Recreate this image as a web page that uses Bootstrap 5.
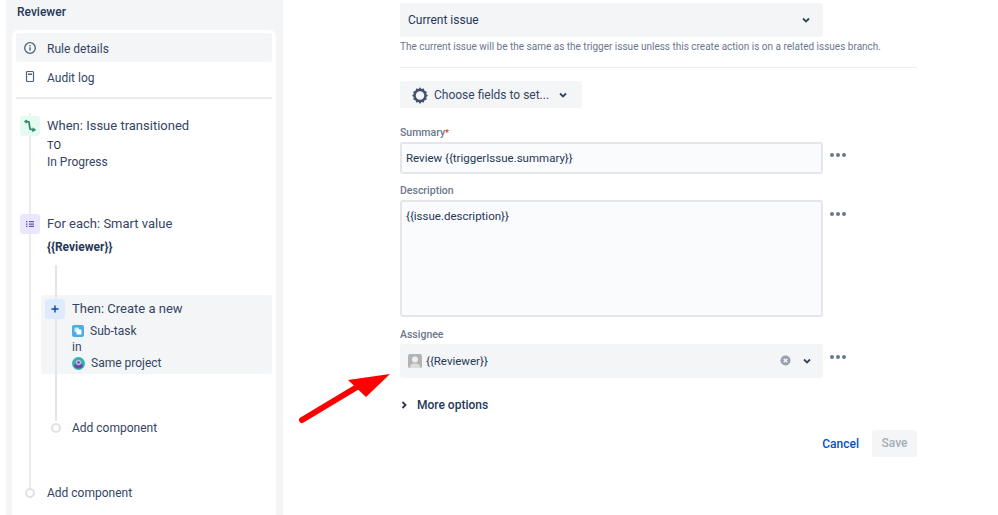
<!DOCTYPE html>
<html lang="en">
<head>
<meta charset="utf-8">
<title>Reviewer rule</title>
<link href="https://cdn.jsdelivr.net/npm/bootstrap@5.3.0/dist/css/bootstrap.min.css" rel="stylesheet">
<style>
html,body{height:515px;overflow:hidden}
body{font-family:Roboto,"Noto Sans",sans-serif;font-size:12px;color:#344563;background:#fff}
.page-wrap{height:515px;position:relative}
.side-col{width:277px;margin-left:6px;background:#f4f5f7;height:515px;flex:none;padding:0 7px 0 6px}
.side-title{height:30px;padding:4px 0 0 5px;font-size:12px;font-weight:500;line-height:16px;color:#253858}
.side-panel{background:#fff;border-radius:6px 6px 0 0;height:485px;padding:3px 4px 0;position:relative}
.nav-row{height:29px;display:flex;align-items:center;padding-left:7px;gap:10px;border-radius:3px}
.nav-row span{padding-top:2px}
.nav-row.on{background:#f4f5f7}
.nav-ic{width:14px;height:14px;flex:none;display:block}
.side-rule{height:2px;background:#ebecf0;margin:6px 0 0}
.step-a{position:relative;display:flex;gap:7px;padding-left:4px}
.step-a.s1{margin-top:17px;height:98px}
.step-a.s2{height:81px}
.ic-box{width:20px;height:20px;border-radius:3px;flex:none;display:flex;align-items:center;justify-content:center;position:relative;z-index:1}
.ic-green{background:#e3fcef}
.ic-purple{background:#eae6ff}
.ic-blue{background:#deebff}
.step-ttl{font-size:13px;line-height:18px;margin-bottom:3px}
.then-box .step-ttl{margin-bottom:5px}
.step-txt{padding-top:1px}
.step-l{line-height:16px;color:#344563}
.to-lbl{font-size:11px;color:#172b4d}
.bold-l{font-weight:700;color:#253858;margin-top:6px;line-height:16px}
.rail-out{position:absolute;left:17px;top:83px;width:2px;height:377px;background:#ebecf0}
.rail-in{position:absolute;left:43px;top:235px;width:2px;height:156px;background:#e4e6eb;z-index:1}
.then-box{margin-left:25px;height:79px;background:#f4f5f7;border-radius:3px;padding:4px;display:flex;gap:7px;position:relative}
.then-row{display:flex;align-items:center;gap:6px;line-height:16px}
.add-row{display:flex;align-items:center;gap:12px;position:relative;z-index:1}
.add-dot{width:10px;height:10px;border-radius:50%;border:2px solid #dfe1e6;background:#fff;flex:none}
.add-in{margin:45px 0 0 35px;gap:11px}
.add-out{margin:47px 0 0 9px}
.main-col{width:517px;margin-left:117px;flex:none;padding-top:3px}
.sel-box{width:423px;height:34px;background:#f4f5f7;border-radius:3px;display:flex;align-items:center;padding:0 8px;color:#253858;font-size:12px}
.help-txt{font-size:10px;line-height:14px;color:#6b778c;margin-top:3px}
.form-rule{height:1px;background:#ebecf0;margin:13px 0}
.set-btn{display:inline-flex;align-items:center;width:182px;height:27px;background:#f4f5f7;border-radius:3px;padding:0 0 0 11px;gap:5px;color:#344563;font-size:12px;font-weight:400}
.f-lbl{font-size:10.5px;line-height:14px;color:#6b778c;font-weight:500}
.req-mark{color:#de350b;font-size:9px}
.f-row{display:flex;gap:4px;margin-top:2px}
.f-in{width:423px;border:2px solid #e4e6eb;background:#fafbfc;border-radius:3px;padding:0 4px;color:#253858;display:flex;align-items:center;font-size:11.5px}
.h-one{height:32px;padding-top:2px}
.h-multi{height:117px;align-items:flex-start;padding-top:6px}
.dots{display:flex;gap:2px;padding:0 0 0 3px;height:3px;margin-top:11px}
.dots.low{margin-top:12px}
.dots i{display:block;width:4px;height:4px;border-radius:50%;background:#6b778c}
.lbl-sum{margin-top:17px}
.lbl-gap{margin-top:10px}
.lbl-gap2{margin-top:11px}
.ctl-ic{gap:11px;padding-right:3px}
.rev-txt{font-size:11.5px;padding-top:2px}
.more-row{display:flex;align-items:center;gap:9px;font-weight:500;color:#253858;margin-top:18px;line-height:18px;font-size:12px}
.act-row{display:flex;justify-content:flex-end;align-items:center;gap:13px;margin-top:16px}
.cancel-lnk{color:#0052cc;text-decoration:none;font-weight:500;padding-top:1px}
.save-btn{width:45px;height:27px;background:#f4f5f7;color:#a5adba;border:0;border-radius:3px;padding:0;font-size:12px;font-weight:500}
.arrow-svg{position:absolute;left:295px;top:368px}
</style>
</head>
<body>
<div class="page-wrap d-flex">
  <aside class="side-col">
    <div class="side-title">Reviewer</div>
    <div class="side-panel">
      <div class="rail-out"></div>
      <div class="rail-in"></div>
      <div class="nav-row on">
        <svg class="nav-ic" viewBox="0 0 14 14"><circle cx="7" cy="7" r="5.300" fill="none" stroke="#505f79" stroke-width="1.300"/><rect x="6.300" y="6.200" width="1.400" height="3.400" fill="#505f79"/><rect x="6.300" y="4.100" width="1.400" height="1.300" fill="#505f79"/></svg>
        <span>Rule details</span>
      </div>
      <div class="nav-row">
        <svg class="nav-ic" viewBox="0 0 14 14"><rect x="3.500" y="1.500" width="7" height="10" rx="1" fill="none" stroke="#505f79" stroke-width="1.200"/><rect x="5" y="3.500" width="4" height="1.500" fill="#505f79"/></svg>
        <span>Audit log</span>
      </div>
      <div class="side-rule"></div>
      <div class="step-a s1">
        <div class="ic-box ic-green"><svg width="14" height="14" viewBox="0 0 16 16"><path d="M3 2.500 6.800 3.500 8 11.500 12 12.500" fill="none" stroke="#36866a" stroke-width="2"/><path d="M4.500 .5 1 2.500 4 5.500ZM11 9.500 15 12.500 10.500 15Z" fill="#36866a"/></svg></div>
        <div class="step-txt">
          <div class="step-ttl">When: Issue transitioned</div>
          <div class="step-l to-lbl">TO</div>
          <div class="step-l">In Progress</div>
        </div>
      </div>
      <div class="step-a s2">
        <div class="ic-box ic-purple"><svg width="12" height="12" viewBox="0 0 12 12"><path d="M2 3h1.500v1.300H2zM5 3h5v1.300H5zM2 5.400h1.500v1.300H2zM5 5.400h5v1.300H5zM2 7.800h1.500v1.300H2zM5 7.800h5v1.300H5z" fill="#6554c0"/></svg></div>
        <div class="step-txt">
          <div class="step-ttl">For each: Smart value</div>
          <div class="bold-l">{{Reviewer}}</div>
        </div>
      </div>
      <div class="then-box">
        <div class="ic-box ic-blue"><svg width="10" height="10" viewBox="0 0 10 10"><path d="M4.300 1.500h1.400v2.800h2.800v1.400H5.700v2.800H4.300V5.700H1.500V4.300h2.800z" fill="#0747a6"/></svg></div>
        <div class="step-txt">
          <div class="step-ttl">Then: Create a new</div>
          <div class="then-row"><svg width="12" height="12" viewBox="0 0 12 12"><rect width="12" height="12" rx="2" fill="#4bade8"/><rect x="2.500" y="2.500" width="4.500" height="4.500" rx=".5" fill="#fff" opacity=".75"/><rect x="4.500" y="4.500" width="5" height="5" rx=".5" fill="#fff"/></svg><span>Sub-task</span></div>
          <div class="step-l">in</div>
          <div class="then-row"><svg width="13" height="13" viewBox="0 0 13 13"><circle cx="6.500" cy="6.500" r="6.500" fill="#2fb5ae"/><path d="M2 9.500a4.500 3.500 0 0 1 9 0 6 6 0 0 1-9 0z" fill="#6d4aa8"/><circle cx="6.500" cy="5.500" r="2.700" fill="#c9b7e6"/><circle cx="6.500" cy="5.500" r="1.300" fill="#6d4aa8"/></svg><span>Same project</span></div>
        </div>
      </div>
      <div class="add-row add-in"><span class="add-dot"></span><span>Add component</span></div>
      <div class="add-row add-out"><span class="add-dot"></span><span>Add component</span></div>
    </div>
  </aside>
  <main class="main-col">
    <div class="sel-box justify-content-between"><span>Current issue</span>
      <svg class="me-1" width="10" height="10" viewBox="0 0 10 10"><path d="M2 3.500 5 6.500 8 3.500" fill="none" stroke="#344563" stroke-width="1.800"/></svg></div>
    <div class="help-txt">The current issue will be the same as the trigger issue unless this create action is on a related issues branch.</div>
    <div class="form-rule"></div>
    <div class="set-btn">
      <svg width="18" height="18" viewBox="0 0 16 16"><path d="M8 1 9.300 2.700 11.400 2.300 12 4.300 14 5 13.500 7 15 8.500 13.500 10 14 12 12 12.700 11.400 14.700 9.300 14.200 8 15.900 6.700 14.200 4.600 14.700 4 12.700 2 12 2.500 10 1 8.500 2.500 7 2 5 4 4.300 4.600 2.300 6.700 2.700Z" fill="#42526e"/><circle cx="8" cy="8.500" r="3.800" fill="#f4f5f7"/></svg>
      <span>Choose fields to set...</span>
      <svg class="ms-1" width="10" height="10" viewBox="0 0 10 10"><path d="M2 3.500 5 6.500 8 3.500" fill="none" stroke="#344563" stroke-width="1.800"/></svg>
    </div>
    <div class="f-lbl lbl-sum">Summary<span class="req-mark">*</span></div>
    <div class="f-row"><div class="f-in h-one">Review {{triggerIssue.summary}}</div><div class="dots"><i></i><i></i><i></i></div></div>
    <div class="f-lbl lbl-gap">Description</div>
    <div class="f-row"><div class="f-in h-multi">{{issue.description}}</div><div class="dots low"><i></i><i></i><i></i></div></div>
    <div class="f-lbl lbl-gap2">Assignee</div>
    <div class="f-row">
      <div class="sel-box justify-content-between ps-2 pe-2">
        <span class="d-flex align-items-center gap-1">
          <svg width="14" height="14" viewBox="0 0 14 14"><rect width="14" height="14" rx="2" fill="#b3b3b3"/><circle cx="7" cy="5.500" r="3" fill="#eee"/><path d="M2 14c0-4 2-4.500 5-4.500s5 .5 5 4.500z" fill="#ddd"/></svg>
          <span class="rev-txt">{{Reviewer}}</span>
        </span>
        <span class="d-flex align-items-center ctl-ic">
          <svg width="11" height="11" viewBox="0 0 11 11"><circle cx="5.500" cy="5.500" r="5" fill="#97a0af"/><path d="M3.700 3.700 7.300 7.300M7.300 3.700 3.700 7.300" stroke="#f4f5f7" stroke-width="1.400"/></svg>
          <svg width="10" height="10" viewBox="0 0 10 10"><path d="M2 3.500 5 6.500 8 3.500" fill="none" stroke="#344563" stroke-width="1.800"/></svg>
        </span>
      </div>
      <div class="dots"><i></i><i></i><i></i></div>
    </div>
    <div class="more-row"><svg width="8" height="10" viewBox="0 0 8 10"><path d="M2.500 2 5.500 5 2.500 8" fill="none" stroke="#253858" stroke-width="1.800"/></svg><span>More options</span></div>
    <div class="act-row"><a class="cancel-lnk" href="#">Cancel</a><button class="save-btn" type="button">Save</button></div>
  </main>
  <svg class="arrow-svg" width="100" height="60" viewBox="0 0 100 60"><path d="M7 52 62 19" stroke="#f00" stroke-width="6" stroke-linecap="round"/><path d="M95 6 53 12 71 29Z" fill="#f00"/></svg>
</div>
</body>
</html>
